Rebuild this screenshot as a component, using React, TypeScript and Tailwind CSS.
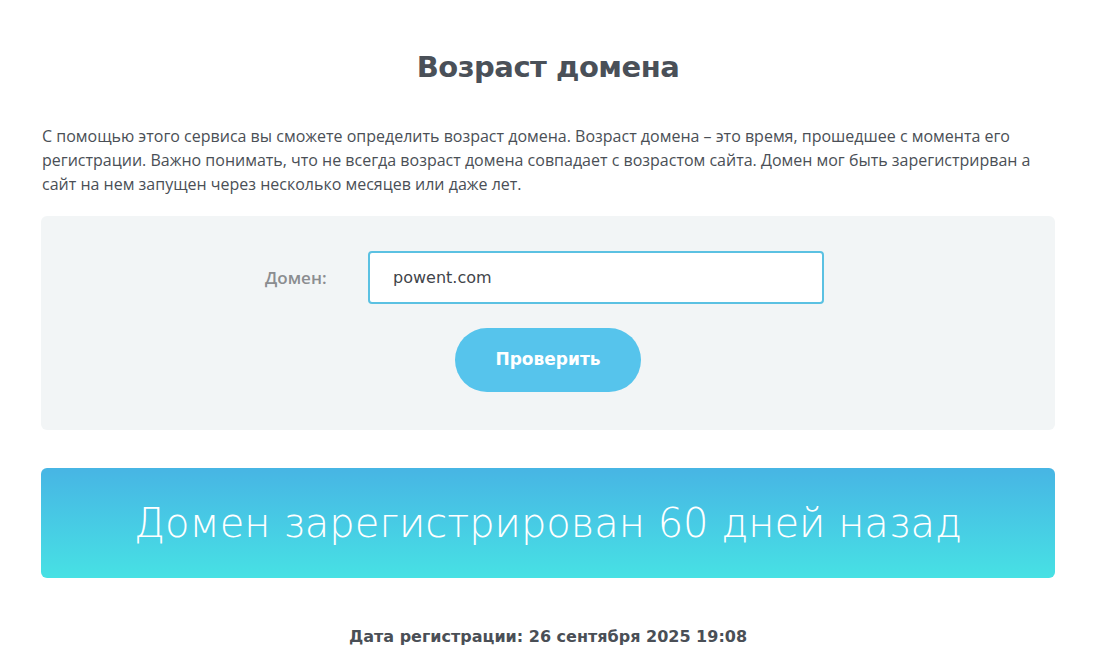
export default function App() {
  return (
    <div className="min-h-screen bg-white px-[41px] text-[#4a4f56]">
      <h1 className="pt-[47px] text-center text-[29px] font-bold leading-[40px] text-[#4a5058] [font-family:'DejaVu_Sans',sans-serif] tracking-[-0.5px]">
        Возраст домена
      </h1>
      <p className="mt-[37px] pl-[1px] text-[16px] leading-[24px] text-[#4a4f56] [font-family:'Open_Sans',sans-serif]">
        С помощью этого сервиса вы сможете определить возраст домена. Возраст домена – это время, прошедшее с момента его
        <br />
        регистрации. Важно понимать, что не всегда возраст домена совпадает с возрастом сайта. Домен мог быть зарегистрирван а
        <br />
        сайт на нем запущен через несколько месяцев или даже лет.
      </p>
      <div className="mt-[20px] flex h-[214px] flex-col items-center rounded-[6px] bg-[#f2f5f6] pt-[35px]">
        <div className="flex items-center pr-[7px]">
          <label className="w-[103px] text-[17px] font-semibold text-[#8b8d90] [font-family:'Open_Sans',sans-serif]">
            Домен:
          </label>
          <div className="flex h-[53px] w-[456px] items-center rounded-[4px] border-2 border-[#5bc1e2] bg-white pl-[23px] text-[16px] text-[#3f444a] [font-family:'DejaVu_Sans',sans-serif]">
            powent.com
          </div>
        </div>
        <button className="mt-[24px] h-[64px] w-[186px] rounded-full bg-[#56c4ec] text-[17px] font-bold text-white [font-family:'DejaVu_Sans',sans-serif]">
          Проверить
        </button>
      </div>
      <div className="mt-[38px] flex h-[110px] items-center justify-center rounded-[6px] bg-gradient-to-b from-[#47b5e4] to-[#47e1e4]">
        <span className="text-[40px] font-light text-white [font-family:'DejaVu_Sans',sans-serif]">
          Домен зарегистрирован 60 дней назад
        </span>
      </div>
      <div className="mt-[47px] text-center text-[16px] font-bold text-[#4a4f56] [font-family:'DejaVu_Sans',sans-serif]">
        Дата регистрации: 26 сентября 2025 19:08
      </div>
    </div>
  );
}
